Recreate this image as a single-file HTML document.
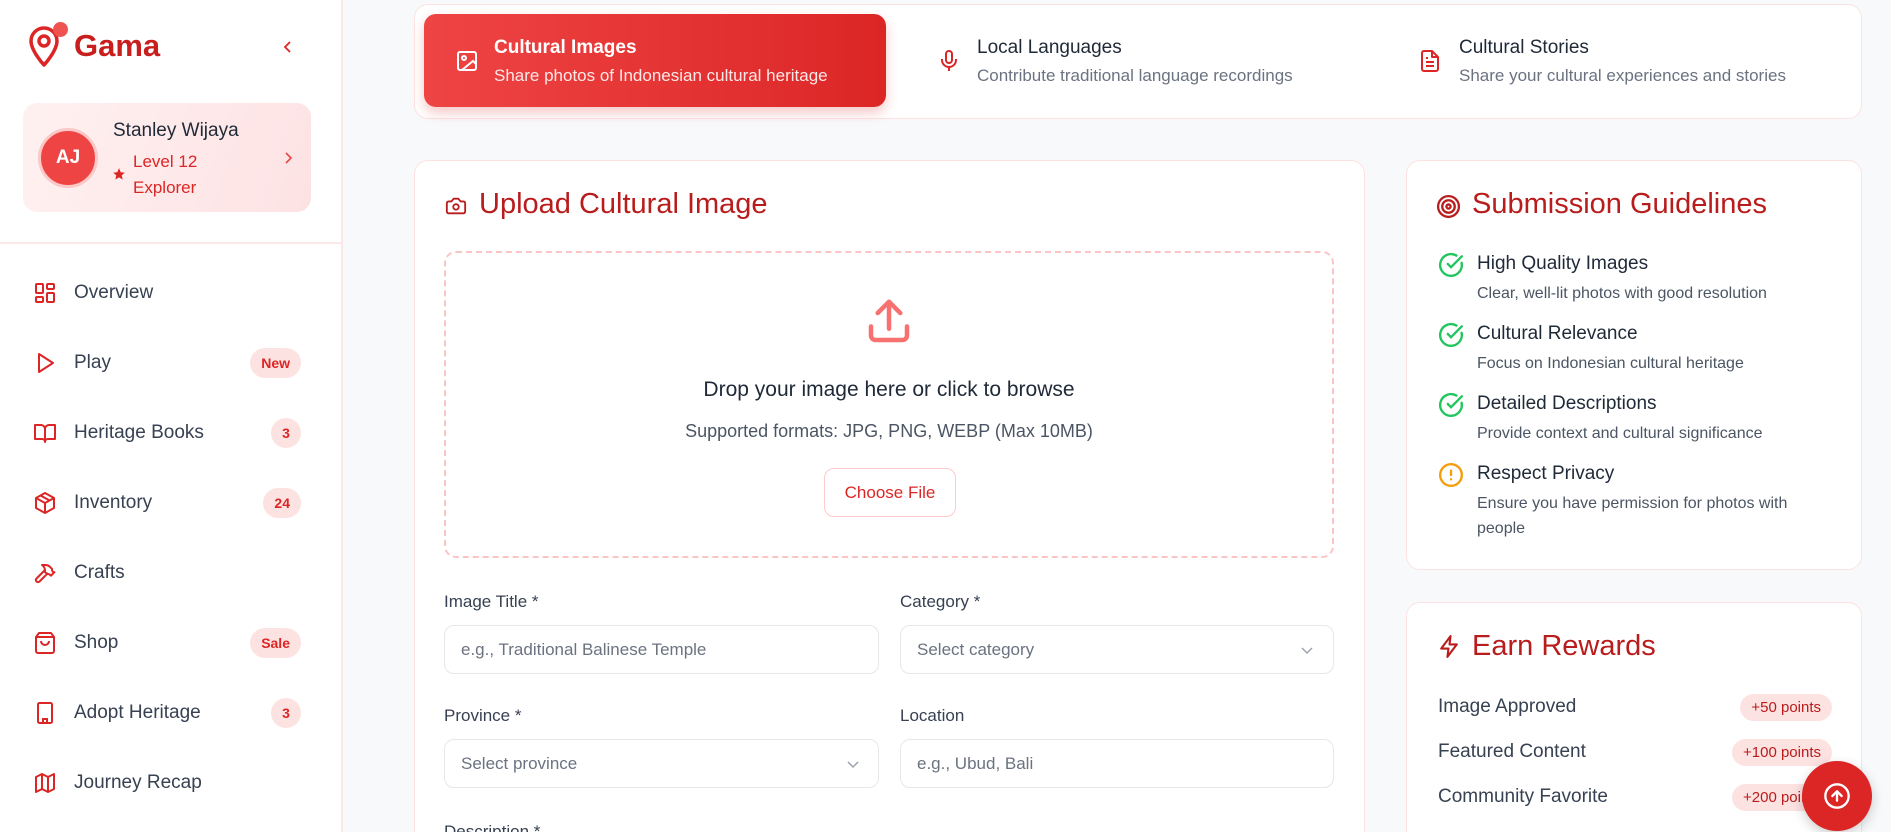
<!DOCTYPE html>
<html><head><meta charset="utf-8"><style>
*{box-sizing:border-box;margin:0;padding:0}
html,body{width:1891px;height:832px;overflow:hidden}
body{background:#f8f9fb;font-family:"Liberation Sans",sans-serif;color:#374151}
#w{position:relative;width:1891px;height:832px;overflow:hidden}
.a{position:absolute}
.sb{left:0;top:0;width:343px;height:832px;background:#fff;border-right:2px solid #fde8e8}
.nav{left:0;width:343px;height:40px;display:flex;align-items:center}
.nav svg{position:absolute;left:33px;width:24px;height:24px}
.nav span.t{position:absolute;left:74px;font-size:19px;color:#374151}
.badge{position:absolute;right:42px;height:30px;border-radius:15px;background:#fde2e2;color:#dc2626;font-size:14px;font-weight:bold;display:flex;align-items:center;justify-content:center;padding:0 11px;min-width:30px}
.card{background:#fff;border:1px solid #fde2e2;border-radius:14px}
.lbl{font-size:17px;color:#374151}
.inp{height:49px;border:1px solid #e5e7eb;border-radius:10px;background:#fff;font-size:17px;color:#6b7280;display:flex;align-items:center;padding-left:16px}
.gi{left:1438px;width:26px;height:26px}
.gt{left:1477px;font-size:19px;color:#1f2937}
.gs{left:1477px;font-size:16px;color:#4b5563;line-height:25px}
.rw{left:1438px;font-size:19px;color:#374151}
.pt{right:59px;height:27px;border-radius:14px;background:#fde2e2;color:#b91c1c;font-size:15px;display:flex;align-items:center;padding:0 11px}
</style></head><body><div id="w">
<div class="a sb"></div>
<svg class="a" style="left:27px;top:24px" width="34" height="44" viewBox="0 0 34 44"><path d="M17 41C17 41 4 27 4 17a13 13 0 0 1 26 0c0 10-13 24-13 24z" fill="none" stroke="#dc2626" stroke-width="3.5" stroke-linejoin="round"/><circle cx="17" cy="17" r="5" fill="none" stroke="#dc2626" stroke-width="3.5"/></svg>
<div class="a" style="left:53px;top:22px;width:15px;height:15px;border-radius:50%;background:#ef5350"></div>
<div class="a" style="left:74px;top:28px;font-size:31px;font-weight:bold;color:#c81e1e">Gama</div>
<svg class="a" style="left:281px;top:40px" width="14" height="14" viewBox="0 0 14 14"><path d="M9 2L4 7l5 5" fill="none" stroke="#dc2626" stroke-width="1.8"/></svg>
<div class="a" style="left:23px;top:103px;width:288px;height:109px;border-radius:14px;background:linear-gradient(110deg,#fff1f1,#fde2e3)"></div>
<div class="a" style="left:38px;top:128px;width:60px;height:60px;border-radius:50%;background:#ef4444;border:3px solid #fbc8c8;color:#fff;font-weight:bold;font-size:19px;display:flex;align-items:center;justify-content:center">AJ</div>
<div class="a" style="left:113px;top:120px;font-size:19px;color:#1f2937">Stanley Wijaya</div>
<div class="a" style="left:133px;top:149px;font-size:17px;color:#dc2626;line-height:26px">Level 12<br>Explorer</div>
<svg class="a" style="left:112px;top:167px" width="14" height="14" viewBox="0 0 24 24"><path d="M12 2l3 7 7 .6-5.3 4.7 1.6 7.2L12 17.8 5.7 21.5l1.6-7.2L2 9.6 9 9z" fill="#dc2626"/></svg>
<svg class="a" style="left:281px;top:151px" width="14" height="14" viewBox="0 0 14 14"><path d="M5 2l5 5-5 5" fill="none" stroke="#ef4444" stroke-width="1.6"/></svg>
<div class="a" style="left:0;top:242px;width:343px;height:2px;background:#fde8e8"></div>
<div class="a nav" style="top:273px"><svg viewBox="0 0 24 24" fill="none" stroke="#dc2626" stroke-width="2"><rect x="3" y="3" width="7" height="9" rx="1"/><rect x="14" y="3" width="7" height="5" rx="1"/><rect x="14" y="12" width="7" height="9" rx="1"/><rect x="3" y="16" width="7" height="5" rx="1"/></svg><span class="t">Overview</span></div>
<div class="a nav" style="top:343px"><svg viewBox="0 0 24 24" fill="none" stroke="#dc2626" stroke-width="2" stroke-linejoin="round"><path d="M6 3l14 9-14 9z"/></svg><span class="t">Play</span><span class="badge">New</span></div>
<div class="a nav" style="top:413px"><svg viewBox="0 0 24 24" fill="none" stroke="#dc2626" stroke-width="2" stroke-linejoin="round"><path d="M2 4h6a4 4 0 0 1 4 4v13a3 3 0 0 0-3-3H2zM22 4h-6a4 4 0 0 0-4 4v13a3 3 0 0 1 3-3h7z"/></svg><span class="t">Heritage Books</span><span class="badge">3</span></div>
<div class="a nav" style="top:483px"><svg viewBox="0 0 24 24" fill="none" stroke="#dc2626" stroke-width="2" stroke-linejoin="round"><path d="M12 2l9 5v10l-9 5-9-5V7zM3 7l9 5 9-5M12 12v10M7.5 4.5l9 5"/></svg><span class="t">Inventory</span><span class="badge">24</span></div>
<div class="a nav" style="top:553px"><svg viewBox="0 0 24 24" fill="none" stroke="#dc2626" stroke-width="2" stroke-linejoin="round"><path d="M15 12l-8.5 8.5a2.1 2.1 0 0 1-3-3L12 9M17.6 15L22 10.6M20.9 11.7l-1.3-1.3a2 2 0 0 1-.6-1.4V7.9L16.7 5.6A6 6 0 0 0 12.5 4H9l.9.8A6.6 6.6 0 0 1 12 9.5V11l2 2h1.2a2 2 0 0 1 1.4.6l1.3 1.3"/></svg><span class="t">Crafts</span></div>
<div class="a nav" style="top:623px"><svg viewBox="0 0 24 24" fill="none" stroke="#dc2626" stroke-width="2" stroke-linejoin="round"><path d="M6 2L3 6v14a2 2 0 0 0 2 2h14a2 2 0 0 0 2-2V6l-3-4zM3 6h18M16 10a4 4 0 0 1-8 0"/></svg><span class="t">Shop</span><span class="badge">Sale</span></div>
<div class="a nav" style="top:693px"><svg viewBox="0 0 24 24" fill="none" stroke="#dc2626" stroke-width="2"><rect x="5" y="2" width="14" height="20" rx="1.5"/><path d="M10 22v-4h4v4M9 6h.01M12 6h.01M15 6h.01M9 10h.01M12 10h.01M15 10h.01M9 14h.01M12 14h.01M15 14h.01"/></svg><span class="t">Adopt Heritage</span><span class="badge">3</span></div>
<div class="a nav" style="top:763px"><svg viewBox="0 0 24 24" fill="none" stroke="#dc2626" stroke-width="2" stroke-linejoin="round"><path d="M3 6l6-3 6 3 6-3v15l-6 3-6-3-6 3zM9 3v15M15 6v15"/></svg><span class="t">Journey Recap</span></div>

<div class="a card" style="left:414px;top:4px;width:1448px;height:115px"></div>
<div class="a" style="left:424px;top:14px;width:462px;height:93px;border-radius:12px;background:linear-gradient(90deg,#ef4444,#dc2626);box-shadow:0 6px 12px rgba(220,38,38,.25)"></div>
<svg class="a" style="left:455px;top:49px" width="24" height="24" viewBox="0 0 24 24" fill="none" stroke="#fff" stroke-width="2"><rect x="3" y="3" width="18" height="18" rx="2"/><circle cx="9" cy="9" r="2"/><path d="M21 15l-3-3-11 9"/></svg>
<div class="a" style="left:494px;top:37px;font-size:19px;font-weight:bold;color:#fff">Cultural Images</div>
<div class="a" style="left:494px;top:66px;font-size:17px;color:#fde8e8">Share photos of Indonesian cultural heritage</div>
<svg class="a" style="left:937px;top:49px" width="24" height="24" viewBox="0 0 24 24" fill="none" stroke="#dc2626" stroke-width="2"><rect x="9" y="2" width="6" height="12" rx="3"/><path d="M19 10v1a7 7 0 0 1-14 0v-1M12 18v4"/></svg>
<div class="a" style="left:977px;top:37px;font-size:19px;color:#1f2937">Local Languages</div>
<div class="a" style="left:977px;top:66px;font-size:17px;color:#6b7280">Contribute traditional language recordings</div>
<svg class="a" style="left:1418px;top:49px" width="24" height="24" viewBox="0 0 24 24" fill="none" stroke="#dc2626" stroke-width="2" stroke-linejoin="round"><path d="M14 2H6a2 2 0 0 0-2 2v16a2 2 0 0 0 2 2h12a2 2 0 0 0 2-2V8zM14 2v6h6M16 13H8M16 17H8M10 9H8"/></svg>
<div class="a" style="left:1459px;top:37px;font-size:19px;color:#1f2937">Cultural Stories</div>
<div class="a" style="left:1459px;top:66px;font-size:17px;color:#6b7280">Share your cultural experiences and stories</div>

<div class="a card" style="left:414px;top:160px;width:951px;height:700px"></div>
<svg class="a" style="left:445px;top:195px" width="22" height="22" viewBox="0 0 24 24" fill="none" stroke="#b91c1c" stroke-width="2" stroke-linejoin="round"><path d="M14.5 4h-5L7 7H4a2 2 0 0 0-2 2v9a2 2 0 0 0 2 2h16a2 2 0 0 0 2-2V9a2 2 0 0 0-2-2h-3z"/><circle cx="12" cy="13" r="3"/></svg>
<div class="a" style="left:479px;top:188px;font-size:29px;color:#b91c1c">Upload Cultural Image</div>
<div class="a" style="left:444px;top:251px;width:890px;height:307px;border:2px dashed #fcc5c5;border-radius:12px"></div>
<svg class="a" style="left:862px;top:295px" width="54" height="54" viewBox="0 0 24 24" fill="none" stroke="#f87171" stroke-width="2" stroke-linecap="round" stroke-linejoin="round"><path d="M4 14v4a2 2 0 0 0 2 2h12a2 2 0 0 0 2-2v-4M12 15V3M7 8l5-5 5 5"/></svg>
<div class="a" style="left:444px;width:890px;top:378px;text-align:center;font-size:21px;color:#1f2937">Drop your image here or click to browse</div>
<div class="a" style="left:444px;width:890px;top:421px;text-align:center;font-size:18px;color:#4b5563">Supported formats: JPG, PNG, WEBP (Max 10MB)</div>
<div class="a" style="left:824px;top:468px;width:132px;height:49px;border:1px solid #fecaca;border-radius:10px;display:flex;align-items:center;justify-content:center;font-size:17px;color:#dc2626">Choose File</div>
<div class="a lbl" style="left:444px;top:592px">Image Title *</div>
<div class="a lbl" style="left:900px;top:592px">Category *</div>
<div class="a inp" style="left:444px;top:625px;width:435px">e.g., Traditional Balinese Temple</div>
<div class="a inp" style="left:900px;top:625px;width:434px">Select category</div>
<svg class="a" style="left:1300px;top:643px" width="14" height="14" viewBox="0 0 14 14"><path d="M2 5l5 5 5-5" fill="none" stroke="#9ca3af" stroke-width="1.5"/></svg>
<div class="a lbl" style="left:444px;top:706px">Province *</div>
<div class="a lbl" style="left:900px;top:706px">Location</div>
<div class="a inp" style="left:444px;top:739px;width:435px">Select province</div>
<svg class="a" style="left:846px;top:757px" width="14" height="14" viewBox="0 0 14 14"><path d="M2 5l5 5 5-5" fill="none" stroke="#9ca3af" stroke-width="1.5"/></svg>
<div class="a inp" style="left:900px;top:739px;width:434px">e.g., Ubud, Bali</div>
<div class="a lbl" style="left:444px;top:822px">Description *</div>

<div class="a card" style="left:1406px;top:160px;width:456px;height:410px"></div>
<svg class="a" style="left:1436px;top:194px" width="25" height="25" viewBox="0 0 24 24" fill="none" stroke="#b91c1c" stroke-width="2.2"><circle cx="12" cy="12" r="10"/><circle cx="12" cy="12" r="6"/><circle cx="12" cy="12" r="2"/></svg>
<div class="a" style="left:1472px;top:188px;font-size:29px;color:#b91c1c">Submission Guidelines</div>
<svg class="a gi" style="top:252px" viewBox="0 0 24 24" fill="none" stroke="#22c55e" stroke-width="2.2" stroke-linecap="round"><path d="M21.8 10A10 10 0 1 1 17 3.3"/><path d="M9 11l3 3L22 4"/></svg>
<div class="a gt" style="top:253px">High Quality Images</div>
<div class="a gs" style="top:281px">Clear, well-lit photos with good resolution</div>
<svg class="a gi" style="top:322px" viewBox="0 0 24 24" fill="none" stroke="#22c55e" stroke-width="2.2" stroke-linecap="round"><path d="M21.8 10A10 10 0 1 1 17 3.3"/><path d="M9 11l3 3L22 4"/></svg>
<div class="a gt" style="top:323px">Cultural Relevance</div>
<div class="a gs" style="top:351px">Focus on Indonesian cultural heritage</div>
<svg class="a gi" style="top:392px" viewBox="0 0 24 24" fill="none" stroke="#22c55e" stroke-width="2.2" stroke-linecap="round"><path d="M21.8 10A10 10 0 1 1 17 3.3"/><path d="M9 11l3 3L22 4"/></svg>
<div class="a gt" style="top:393px">Detailed Descriptions</div>
<div class="a gs" style="top:421px">Provide context and cultural significance</div>
<svg class="a gi" style="top:462px" viewBox="0 0 24 24" fill="none" stroke="#f59e0b" stroke-width="2.2" stroke-linecap="round"><circle cx="12" cy="12" r="10"/><path d="M12 8v4M12 16h.01"/></svg>
<div class="a gt" style="top:463px">Respect Privacy</div>
<div class="a gs" style="top:491px;width:335px">Ensure you have permission for photos with people</div>

<div class="a card" style="left:1406px;top:602px;width:456px;height:260px"></div>
<svg class="a" style="left:1437px;top:634px" width="25" height="25" viewBox="0 0 24 24" fill="none" stroke="#b91c1c" stroke-width="2" stroke-linejoin="round"><path d="M13 2L4 14h7l-1 8 9-12h-7z"/></svg>
<div class="a" style="left:1472px;top:630px;font-size:29px;color:#b91c1c">Earn Rewards</div>
<div class="a rw" style="top:696px">Image Approved</div>
<div class="a pt" style="top:694px">+50 points</div>
<div class="a rw" style="top:741px">Featured Content</div>
<div class="a pt" style="top:739px">+100 points</div>
<div class="a rw" style="top:786px">Community Favorite</div>
<div class="a pt" style="top:784px">+200 points</div>
<div class="a" style="left:1802px;top:761px;width:70px;height:70px;border-radius:50%;background:#dc2626;box-shadow:0 4px 12px rgba(0,0,0,.2)"></div>
<svg class="a" style="left:1823px;top:782px" width="28" height="28" viewBox="0 0 24 24" fill="none" stroke="#fff" stroke-width="2" stroke-linecap="round" stroke-linejoin="round"><circle cx="12" cy="12" r="10"/><path d="M16 12l-4-4-4 4M12 16V8"/></svg>
</div></body></html>
